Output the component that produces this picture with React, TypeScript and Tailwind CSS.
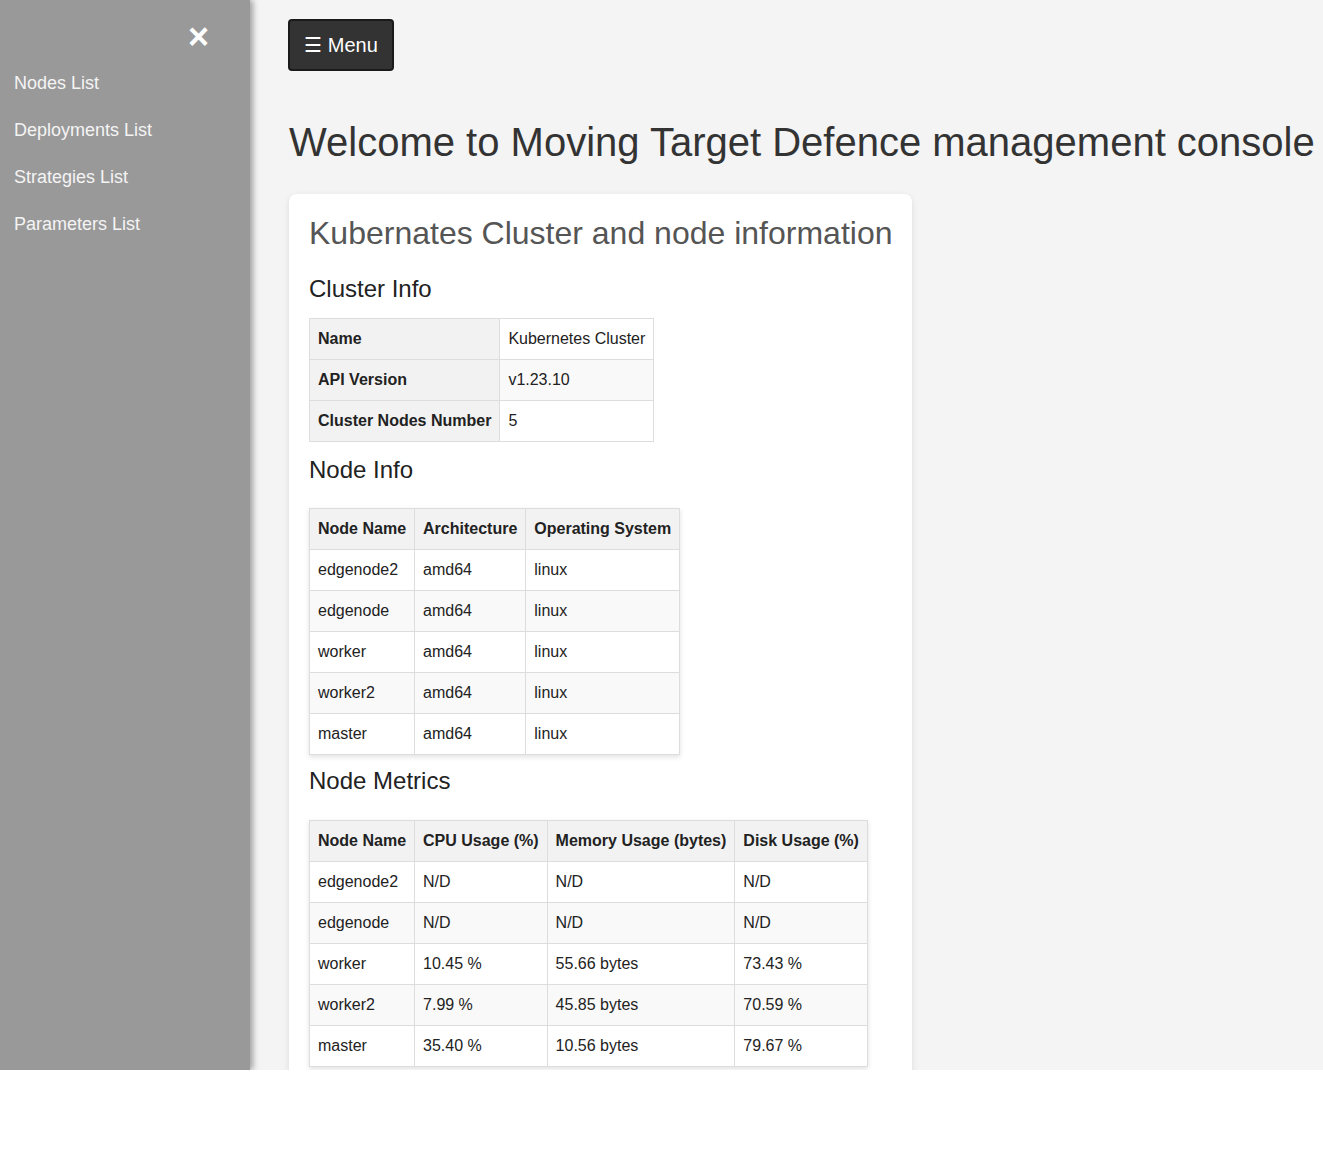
import type React from 'react'

const navLinks = ['Nodes List', 'Deployments List', 'Strategies List', 'Parameters List']

const clusterInfo: [string, string][] = [
  ['Name', 'Kubernetes Cluster'],
  ['API Version', 'v1.23.10'],
  ['Cluster Nodes Number', '5'],
]

const nodes = [
  ['edgenode2', 'amd64', 'linux'],
  ['edgenode', 'amd64', 'linux'],
  ['worker', 'amd64', 'linux'],
  ['worker2', 'amd64', 'linux'],
  ['master', 'amd64', 'linux'],
]

const metrics = [
  ['edgenode2', 'N/D', 'N/D', 'N/D'],
  ['edgenode', 'N/D', 'N/D', 'N/D'],
  ['worker', '10.45 %', '55.66 bytes', '73.43 %'],
  ['worker2', '7.99 %', '45.85 bytes', '70.59 %'],
  ['master', '35.40 %', '10.56 bytes', '79.67 %'],
]

const cell = 'border border-[#ddd] px-2 py-2 leading-[24px] text-left align-middle whitespace-nowrap'
const headCell = `${cell} bg-[#f2f2f2] font-bold`

const DataTable: React.FC<{ head: string[]; rows: string[][]; className?: string }> = ({
  head,
  rows,
  className = 'mt-[24px]',
}) => (
  <table className={`${className} border-collapse shadow-[0_2px_5px_rgba(0,0,0,0.12)]`}>
    <thead>
      <tr>
        {head.map((h) => (
          <th key={h} className={headCell}>
            {h}
          </th>
        ))}
      </tr>
    </thead>
    <tbody>
      {rows.map((r, i) => (
        <tr key={r[0]} className={i % 2 === 1 ? 'bg-[#f9f9f9]' : 'bg-white'}>
          {r.map((v, j) => (
            <td key={j} className={cell}>
              {v}
            </td>
          ))}
        </tr>
      ))}
    </tbody>
  </table>
)

export default function App() {
  return (
    <div className="bg-white font-['Liberation_Sans',Arial,sans-serif] text-[#222]">
      <div className="relative flex h-[1070px] overflow-hidden bg-[#f4f4f4]">
        <aside className="relative z-10 w-[250px] shrink-0 bg-[#999] pt-[60px] shadow-[3px_0_6px_rgba(0,0,0,0.35)]">
          <button className="absolute right-[41px] top-[14px] text-[36px] font-bold leading-[46px] text-white">
            ×
          </button>
          {navLinks.map((l) => (
            <a key={l} href="#" className="block pl-[14px] text-[18px] leading-[47px] text-[#f4f4f4]">
              {l}
            </a>
          ))}
        </aside>

        <main className="min-w-0 flex-1 pl-[39px] pt-[19px]">
          <button className="-ml-px h-[52px] w-[106px] rounded-[4px] border-2 border-[#1a1a1a] bg-[#333] text-[20px] text-white">
            ☰ Menu
          </button>

          <h1 className="mt-[48px] whitespace-nowrap text-[40px] leading-[46px] text-[#333]">
            Welcome to Moving Target Defence management console
          </h1>

          <section className="mt-[29px] w-[623px] rounded-[8px] bg-white px-[20px] pb-[20px] pt-[20px] shadow-[0_2px_6px_rgba(0,0,0,0.1)]">
            <h2 className="whitespace-nowrap text-[32px] leading-[38px] text-[#555]">
              Kubernates Cluster and node information
            </h2>

            <h3 className="mt-[23px] text-[24px] leading-[28px]">Cluster Info</h3>
            <table className="mt-[15px] border-collapse">
              <tbody>
                {clusterInfo.map(([k, v], i) => (
                  <tr key={k}>
                    <th className={headCell}>{k}</th>
                    <td className={`${cell} ${i % 2 === 1 ? 'bg-[#f9f9f9]' : 'bg-white'}`}>{v}</td>
                  </tr>
                ))}
              </tbody>
            </table>

            <h3 className="mt-[14px] text-[24px] leading-[28px]">Node Info</h3>
            <DataTable head={['Node Name', 'Architecture', 'Operating System']} rows={nodes} />

            <h3 className="mt-[12px] text-[24px] leading-[28px]">Node Metrics</h3>
            <DataTable
              className="mt-[25px]"
              head={['Node Name', 'CPU Usage (%)', 'Memory Usage (bytes)', 'Disk Usage (%)']}
              rows={metrics}
            />
          </section>
        </main>
      </div>
      <div className="h-[87px]" />
    </div>
  )
}
